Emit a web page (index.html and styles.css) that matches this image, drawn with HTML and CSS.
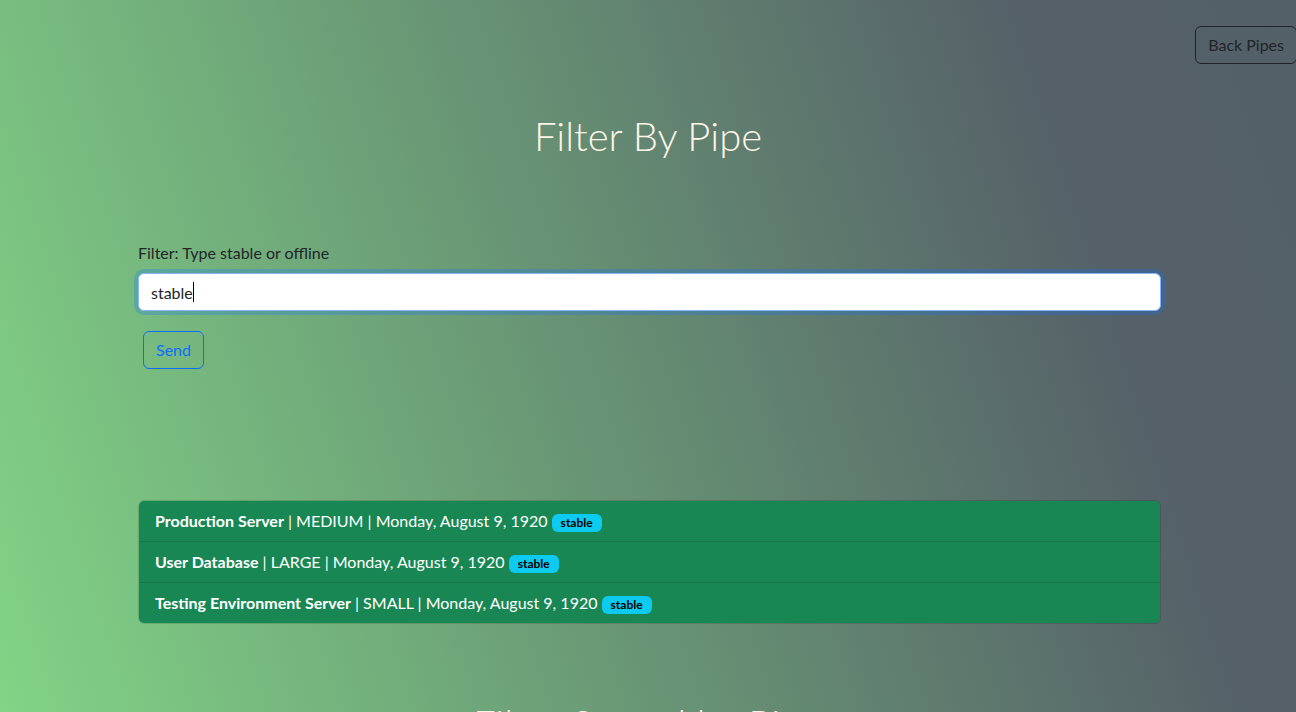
FILE: index.html
```html
<!DOCTYPE html>
<html lang="en">
<head>
<meta charset="utf-8">
<title>Filter By Pipe</title>
<link rel="stylesheet" href="styles.css">
</head>
<body>
<div class="page">
  <div class="topbar">
    <button class="btn btn-outline-dark">Back Pipes</button>
  </div>
  <h1 class="title">Filter By Pipe</h1>
  <div class="content">
    <label class="label" for="filter">Filter: Type stable or offline</label>
    <div class="input-wrap">
      <input id="filter" class="input" type="text" value="stable"><span class="caret"></span>
    </div>
    <button class="btn btn-outline-primary send">Send</button>

    <ul class="list">
      <li class="item"><b>Production Server</b> | MEDIUM | Monday, August 9, 1920 <span class="badge">stable</span></li>
      <li class="item"><b>User Database</b> | LARGE | Monday, August 9, 1920 <span class="badge">stable</span></li>
      <li class="item"><b>Testing Environment Server</b> | SMALL | Monday, August 9, 1920 <span class="badge">stable</span></li>
    </ul>
  </div>
  <h1 class="title next">Filter Sorted by Pipe</h1>
</div>
</body>
</html>
```
FILE: styles.css
```css
* { box-sizing: border-box; }
html, body { margin: 0; height: 100%; }
body {
  font-family: "Lato", "Noto Sans", sans-serif;
  font-size: 16px;
  color: #212529;
  background: linear-gradient(72deg, #82d486 0%, #6a9a76 40%, #556068 82%, #546068 100%);
  overflow: hidden;
}
.page { min-height: 712px; }
.topbar {
  display: flex;
  justify-content: flex-end;
  padding-top: 26px;
}
.btn {
  font-family: inherit;
  font-size: 16px;
  line-height: 24px;
  padding: 6px 12px;
  border-radius: 6px;
  background: transparent;
  cursor: pointer;
  white-space: nowrap;
}
.btn-outline-dark {
  color: #212529;
  border: 1px solid #212529;
  height: 38px;
  margin-right: -1px;
}
.btn-outline-primary {
  color: #0d6efd;
  border: 1px solid #0d6efd;
}
.title {
  font-family: "Lato", sans-serif;
  font-weight: 300;
  font-size: 40px;
  line-height: 48px;
  color: #fdf6e8;
  text-align: center;
  margin: 48px 0 0;
}
.content {
  width: 1023px;
  margin: 81px 0 0 138px;
}
.label {
  display: block;
  line-height: 24px;
  margin-bottom: 8px;
}
.input-wrap { position: relative; }
.input {
  display: block;
  width: 100%;
  height: 38px;
  font-family: inherit;
  font-size: 16px;
  padding: 6px 12px;
  color: #212529;
  background: #fff;
  border: 1px solid #86b7fe;
  border-radius: 6px;
  outline: none;
  box-shadow: 0 0 0 4px rgba(13, 110, 253, 0.25);
}
.caret {
  position: absolute;
  left: 55px;
  top: 9px;
  width: 1px;
  height: 20px;
  background: #000;
}
.send {
  margin: 20px 0 0 5px;
  height: 38px;
}
.list {
  list-style: none;
  margin: 131px 0 0;
  padding: 0;
  border: 1px solid rgba(0,0,0,0.125);
  border-radius: 6px;
  overflow: hidden;
}
.item {
  background: #198754;
  color: #fff;
  padding: 8px 16px;
  line-height: 24px;
  border-bottom: 1px solid rgba(0,0,0,0.125);
}
.item:last-child { border-bottom: 0; }
.item b { font-weight: 700; }
.badge {
  display: inline-block;
  background: #0dcaf0;
  color: #000;
  font-size: 12px;
  font-weight: 700;
  line-height: 12px;
  padding: 3px 9px;
  border-radius: 6px;
  vertical-align: 0;
}
.next { margin-top: 76px; }
```
